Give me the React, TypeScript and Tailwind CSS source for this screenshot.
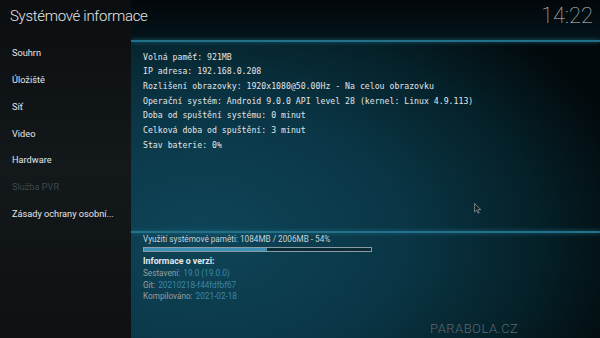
import React from "react";

const menu = [
  { label: "Souhrn", dim: false },
  { label: "Úložiště", dim: false },
  { label: "Síť", dim: false },
  { label: "Video", dim: false },
  { label: "Hardware", dim: false },
  { label: "Služba PVR", dim: true },
  { label: "Zásady ochrany osobní...", dim: false },
];

const info = [
  "Volná paměť: 921MB",
  "IP adresa: 192.168.0.208",
  "Rozlišení obrazovky: 1920x1080@50.00Hz - Na celou obrazovku",
  "Operační systém: Android 9.0.0 API level 28 (kernel: Linux 4.9.113)",
  "Doba od spuštění systému: 0 minut",
  "Celková doba od spuštění: 3 minut",
  "Stav baterie: 0%",
];

const version = [
  { label: "Sestavení:", value: "19.0 (19.0.0)" },
  { label: "Git:", value: "20210218-f44fdfbf67" },
  { label: "Kompilováno:", value: "2021-02-18" },
];

export default function App() {
  return (
    <div className="relative flex w-[600px] h-[338px] overflow-hidden bg-[#0a0d0f] font-['Roboto',sans-serif]">
      {/* sidebar */}
      <div className="relative z-10 flex flex-col w-[131px] shrink-0 bg-[linear-gradient(180deg,#0b0e10_0%,#13181b_50%,#0e1113_100%)]">
        <div className="h-[40px] flex items-center pl-[10px] pb-[8px]">
          <h1 className="whitespace-nowrap text-[15px] font-light text-[#e6e6e6] tracking-[-0.3px]">
            Systémové informace
          </h1>
        </div>
        <div className="flex flex-col pl-[12px] pt-[0px]">
          {menu.map((m) => (
            <div
              key={m.label}
              className={`h-[26.7px] flex items-center whitespace-nowrap text-[9.2px] ${
                m.dim ? "text-[#3f474c]" : "text-[#e4e6e7]"
              }`}
            >
              {m.label}
            </div>
          ))}
        </div>
      </div>

      {/* main */}
      <div className="flex-1 flex flex-col bg-[radial-gradient(ellipse_95%_85%_at_15%_70%,#0e4558_0%,#0a3646_45%,#052129_75%,#02090c_100%)]">
        <div className="h-[40px] flex items-start justify-end pr-[7px] pt-[2px] bg-[linear-gradient(180deg,#020709_0%,#04141a_100%)]">
          <span className="text-[22px] font-thin text-[#c4c9cc] leading-[28px]">14:22</span>
        </div>
        <div className="h-[1.5px] bg-[#23708a] shadow-[0_0_4px_#1e6a80]" />

        <div className="h-[189.5px] flex flex-col pl-[12px] pt-[8px] font-['DejaVu_Sans_Mono',monospace] text-[8.2px] text-[#e2e6e8]">
          {info.map((line) => (
            <div key={line} className="h-[14.7px] flex items-center whitespace-nowrap">
              {line}
            </div>
          ))}
        </div>

        <div className="h-[1.5px] bg-[#23708a] shadow-[0_0_4px_#1e6a80]" />

        <div className="flex flex-col pl-[12px] pt-[2px] text-[8.2px]">
          <div className="h-[10px] flex items-center text-[#c9d2d6] whitespace-nowrap">
            Využití systémové paměti: 1084MB / 2006MB - 54%
          </div>
          <div className="mt-[2px] w-[229px] h-[5px] border border-[#8a9ba3] bg-[#0b2a35]">
            <div className="h-full bg-[#3d8fb3]" style={{ width: "54%" }} />
          </div>
          <div className="mt-[5px] h-[11px] flex items-center text-[8.8px] font-bold text-[#e4e8ea]">
            Informace o verzi:
          </div>
          {version.map((v) => (
            <div key={v.label} className="h-[11.5px] flex items-center gap-[3px] whitespace-nowrap">
              <span className="text-[#949ea3]">{v.label}</span>
              <span className="text-[#3b88a8]">{v.value}</span>
            </div>
          ))}
        </div>
      </div>

      {/* mouse pointer */}
      <svg className="absolute left-[474px] top-[203px]" width="8" height="11" viewBox="0 0 8 11">
        <path d="M0.5 0.5 L0.5 9 L2.6 7 L4 10.2 L5.2 9.7 L3.9 6.6 L6.8 6.6 Z" fill="#1a1f22" stroke="#9aa3a8" strokeWidth="0.7" />
      </svg>

      {/* watermark */}
      <div className="absolute left-[430px] top-[319px] text-[13px] font-light tracking-[0.5px] text-[#5e676c]">
        PARABOLA.CZ
      </div>
    </div>
  );
}
